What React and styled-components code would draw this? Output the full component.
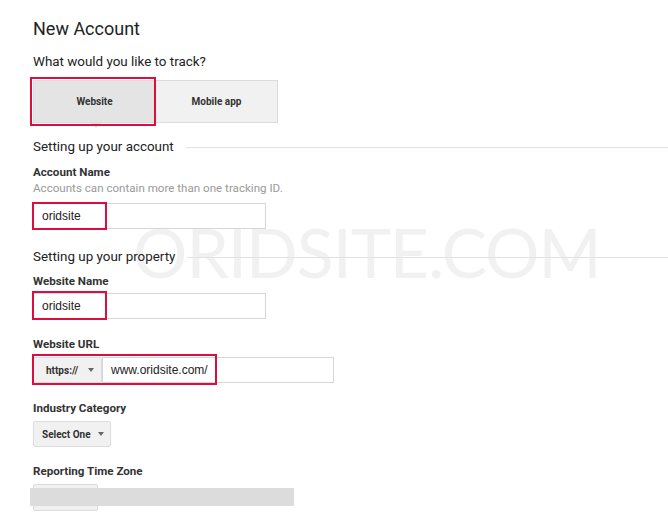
import React from "react";
import styled, { createGlobalStyle } from "styled-components";

const GlobalStyle = createGlobalStyle`
  body {
    margin: 0;
    background: #fff;
    font-family: Roboto, "Liberation Sans", Arial, sans-serif;
    color: #222;
  }
`;

const Page = styled.div`
  position: relative;
  width: 668px;
  height: 527px;
  overflow: hidden;
  padding: 17px 0 0 33px;
  box-sizing: border-box;
  display: flex;
  flex-direction: column;
`;

const Watermark = styled.div`
  position: absolute;
  left: 133px;
  top: 212px;
  font-family: Lato, "Noto Sans", sans-serif;
  font-size: 68px;
  line-height: 80px;
  letter-spacing: -1px;
  color: #f1f1f1;
  white-space: nowrap;
  pointer-events: none;
`;

const Content = styled.div`
  position: relative;
  display: flex;
  flex-direction: column;
`;

const Title = styled.h1`
  margin: 0;
  font-size: 18px;
  line-height: 24px;
  font-weight: 400;
  color: #222;
`;

const Question = styled.div`
  margin-top: 12px;
  font-size: 13.4px;
  line-height: 18px;
  color: #222;
`;

const Tabs = styled.div`
  position: relative;
  margin-top: 9px;
  display: flex;
  width: 246px;
`;

const Tab = styled.div`
  position: relative;
  width: 123px;
  height: 43px;
  box-sizing: border-box;
  display: flex;
  align-items: center;
  justify-content: center;
  font-size: 10px;
  font-weight: 700;
  color: #333;
  border: 1px solid #dcdcdc;
  margin-left: ${(p) => (p.$first ? "0" : "-1px")};
  background: ${(p) => (p.$active ? "#e4e4e4" : "#f1f1f1")};

  ${(p) =>
    p.$active &&
    `
    &::after {
      content: "";
      position: absolute;
      left: 57px;
      bottom: -6px;
      border-left: 5px solid transparent;
      border-right: 5px solid transparent;
      border-top: 5px solid #e2e2e2;
    }
  `}
`;

const Highlight = styled.span`
  position: absolute;
  box-sizing: border-box;
  border: 2px solid #dc0d3f;
  pointer-events: none;
  z-index: 2;
`;

const SectionHead = styled.div`
  margin-top: ${(p) => p.$mt}px;
  display: flex;
  align-items: center;
  gap: 12px;
  font-size: 13.4px;
  line-height: 18px;
  color: #222;
  white-space: nowrap;

  &::after {
    content: "";
    flex: 1;
    height: 1px;
    background: #e2e2e2;
    margin-top: 1px;
  }
`;

const Label = styled.div`
  margin-top: ${(p) => p.$mt}px;
  font-size: 11.6px;
  line-height: 16px;
  font-weight: 700;
  color: #333;
`;

const Help = styled.div`
  font-size: 11.6px;
  line-height: 16px;
  color: #9a9a9a;
`;

const Field = styled.div`
  position: relative;
  margin-top: ${(p) => p.$mt}px;
  display: flex;
  width: ${(p) => p.$w}px;
  height: 26px;
`;

const TextInput = styled.div`
  flex: 1;
  box-sizing: border-box;
  border: 1px solid #d6d6d6;
  padding-left: 8px;
  display: flex;
  align-items: center;
  font-family: "Liberation Sans", Arial, sans-serif;
  font-size: 12px;
  color: #222;
  background: #fff;
`;

const DropButton = styled.div`
  box-sizing: border-box;
  width: ${(p) => p.$w}px;
  height: ${(p) => p.$h || 26}px;
  margin-top: ${(p) => p.$mt || 0}px;
  border: 1px solid #dcdcdc;
  border-radius: 2px;
  background: #f1f1f1;
  display: flex;
  align-items: center;
  padding-left: ${(p) => p.$pad || 8}px;
  gap: ${(p) => p.$gap || 7}px;
  font-size: 10px;
  font-weight: 700;
  color: #333;
`;

const Caret = styled.span`
  width: 0;
  height: 0;
  border-left: 3.5px solid transparent;
  border-right: 3.5px solid transparent;
  border-top: 4px solid #666;
`;

const Redacted = styled.span`
  position: absolute;
  left: -3px;
  top: 4px;
  width: 264px;
  height: 18px;
  background: #dcdcdc;
`;

const ZoneRow = styled.div`
  position: relative;
  margin-top: 5px;
`;

export default function App() {
  return (
    <>
      <GlobalStyle />
      <Page>
        <Watermark>ORIDSITE.COM</Watermark>
        <Content>
          <Title>New Account</Title>
          <Question>What would you like to track?</Question>
          <Tabs>
            <Tab $first $active>Website</Tab>
            <Tab>Mobile app</Tab>
            <Highlight style={{ left: -3, top: -3, width: 126, height: 49 }} />
          </Tabs>

          <SectionHead $mt={15}>Setting up your account</SectionHead>
          <Label $mt={8}>Account Name</Label>
          <Help>Accounts can contain more than one tracking ID.</Help>
          <Field $mt={7} $w={233}>
            <TextInput>oridsite</TextInput>
            <Highlight style={{ left: -1, top: -1, width: 75, height: 28 }} />
          </Field>

          <SectionHead $mt={19}>Setting up your property</SectionHead>
          <Label $mt={7}>Website Name</Label>
          <Field $mt={4} $w={233}>
            <TextInput>oridsite</TextInput>
            <Highlight style={{ left: -1, top: -2, width: 75, height: 29 }} />
          </Field>

          <Label $mt={17}>Website URL</Label>
          <Field $mt={5} $w={301}>
            <DropButton $w={69} $pad={12} $gap={10}>
              https:// <Caret />
            </DropButton>
            <TextInput>www.oridsite.com/</TextInput>
            <Highlight style={{ left: -1, top: -3, width: 185, height: 31 }} />
          </Field>

          <Label $mt={17}>Industry Category</Label>
          <DropButton $w={78} $mt={5}>
            Select One <Caret />
          </DropButton>

          <Label $mt={16}>Reporting Time Zone</Label>
          <ZoneRow>
            <DropButton $w={65} $h={27} />
            <Redacted />
          </ZoneRow>
        </Content>
      </Page>
    </>
  );
}
